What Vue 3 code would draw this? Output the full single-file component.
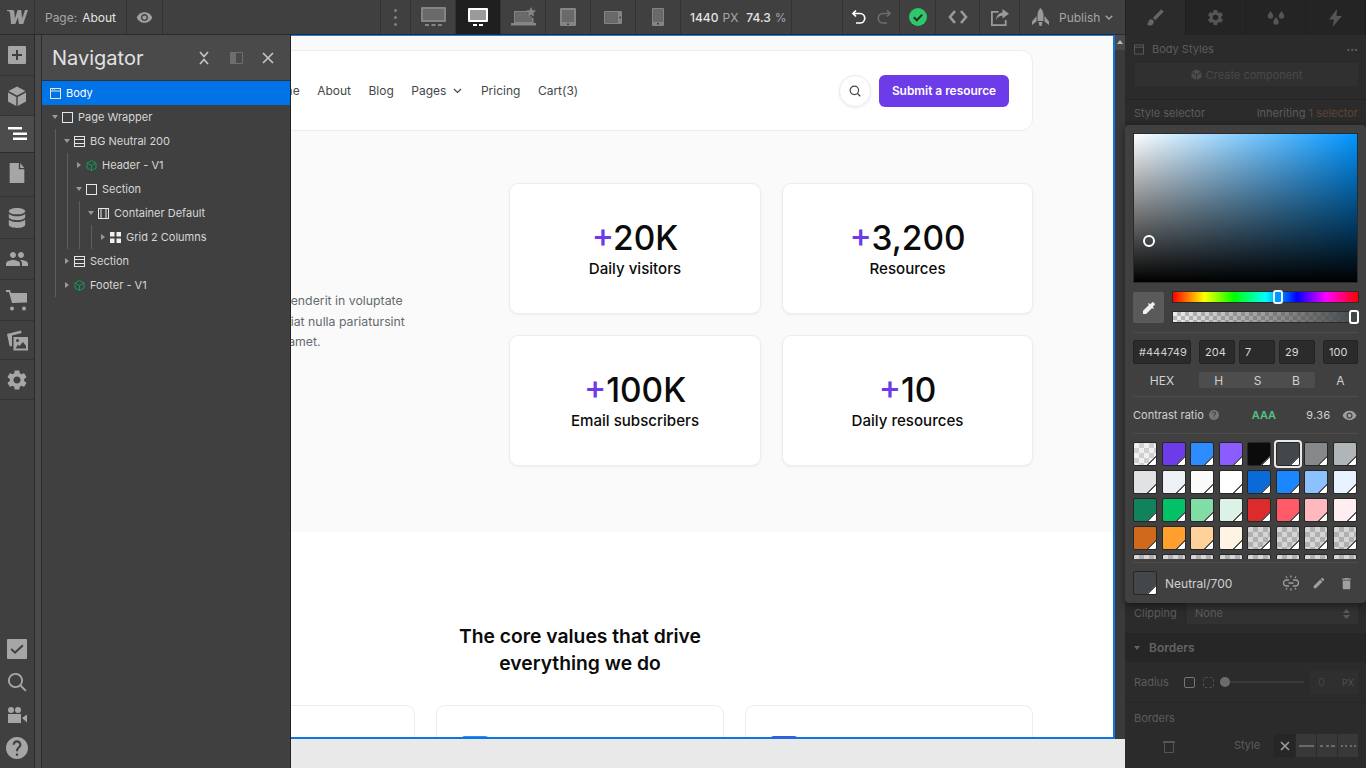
<script setup>
const railTop = [
  { id: "add", h: 41, w: 20, vb: "0 0 20 20", d: "M2 1h16a1 1 0 0 1 1 1v16a1 1 0 0 1-1 1H2a1 1 0 0 1-1-1V2a1 1 0 0 1 1-1zm7 4v4H5v2h4v4h2v-4h4V9h-4V5z" },
  { id: "cube", h: 40, w: 20, vb: "0 0 20 20", d: "M10 0.500L18.500 5 10 9.500 1.500 5zM1 6.500l8.300 4.400V20L1 15.500zM19 6.500l-8.300 4.400V20L19 15.500z" },
  { id: "nav", h: 37, w: 20, vb: "0 0 20 20", active: true, d: "M0 3h14v2.500H0zM5 8.500h14V11H5zM5 13.500h14V16H5z" },
  { id: "page", h: 44, w: 22, vb: "0 0 20 24", low: true, d: "M2 1h10v7h6v15H2zM13.500 1L18 6.500h-4.500z" },
  { id: "db", h: 42, w: 20, vb: "0 0 20 22", d: "M10 0c5 0 9 1.500 9 3.500S15 7 10 7 1 5.500 1 3.500 5 0 10 0zM1 6.500C3 8.300 6.500 9 10 9s7-.7 9-2.500V10c0 2-4 3.500-9 3.500S1 12 1 10zM1 13c2 1.800 5.500 2.500 9 2.500s7-.7 9-2.500v5.500c0 2-4 3.500-9 3.500s-9-1.500-9-3.500z" },
  { id: "users", h: 41, w: 24, vb: "0 0 24 24", d: "M16 11c1.660 0 2.990-1.340 2.990-3S17.660 5 16 5c-1.660 0-3 1.340-3 3s1.340 3 3 3zm-8 0c1.660 0 2.990-1.340 2.990-3S9.660 5 8 5C6.340 5 5 6.340 5 8s1.340 3 3 3zm0 2c-2.330 0-7 1.170-7 3.500V19h14v-2.500c0-2.330-4.670-3.500-7-3.500zm8 0c-.29 0-.62.02-.97.05 1.160.84 1.970 1.970 1.970 3.450V19h6v-2.500c0-2.330-4.670-3.500-7-3.500z" },
  { id: "cart", h: 41, w: 22, vb: "0 0 22 22", d: "M0 1h4l1 3h16v9.500L6 14 3 3H0zM6 17.500a2 2 0 1 1 0 4 2 2 0 0 1 0-4zM18 17.500a2 2 0 1 1 0 4 2 2 0 0 1 0-4z" },
  { id: "assets", h: 39, w: 21, vb: "0 0 21 20", d: "M0 3.500L14 0l.6 2.500L5 5v10.500l-2.300.6zM6.500 6.500H21V20H6.500zM8.500 18h10.500v-2.500l-3-4-3.500 4-1.500-1.500zM10.500 8.500a1.500 1.500 0 1 0 0 3 1.500 1.500 0 0 0 0-3z" },
  { id: "gear", h: 40, w: 24, vb: "0 0 24 24", d: "M19.140 12.940c.04-.3.06-.61.06-.94 0-.32-.02-.64-.07-.94l2.030-1.580c.18-.14.23-.41.12-.61l-1.920-3.320c-.12-.22-.37-.29-.59-.22l-2.390.96c-.5-.38-1.030-.7-1.620-.94l-.36-2.540c-.04-.24-.24-.41-.48-.41h-3.840c-.24 0-.43.17-.47.41l-.36 2.540c-.59.24-1.130.57-1.620.94l-2.390-.96c-.22-.08-.47 0-.59.22L2.740 8.870c-.12.21-.08.47.12.61l2.030 1.580c-.05.3-.09.63-.09.94s.02.64.07.94l-2.030 1.580c-.18.14-.23.41-.12.61l1.920 3.320c.12.22.37.29.59.22l2.390-.96c.5.38 1.030.7 1.620.94l.36 2.540c.05.24.24.41.48.41h3.840c.24 0 .44-.17.47-.41l.36-2.540c.59-.24 1.130-.56 1.620-.94l2.390.96c.22.08.47 0 .59-.22l1.920-3.320c.12-.22.07-.47-.12-.61l-2.010-1.580zM12 15.600c-1.980 0-3.600-1.620-3.600-3.600s1.620-3.600 3.600-3.600 3.600 1.620 3.600 3.600-1.620 3.600-3.600 3.600z" },
];

const railBottom = [
  { id: "tasks", w: 20, vb: "0 0 20 20", d: "M1 0h18a1 1 0 0 1 1 1v18a1 1 0 0 1-1 1H1a1 1 0 0 1-1-1V1a1 1 0 0 1 1-1zm14.200 5.500L8 12.300 4.800 9.300 3.500 10.700 8 15l8.600-8z" },
  { id: "search", w: 20, vb: "0 0 20 20", d: "M8.500 1a7.500 7.500 0 0 1 5.900 12.100l5.100 5.100-1.300 1.300-5.100-5.100A7.500 7.500 0 1 1 8.500 1zm0 1.800a5.700 5.700 0 1 0 0 11.400 5.700 5.700 0 0 0 0-11.400z" },
  { id: "video", w: 20, vb: "0 0 20 16", d: "M4 0a3 3 0 1 1 0 6 3 3 0 0 1 0-6zM11 0a3 3 0 1 1 0 6 3 3 0 0 1 0-6zM1 7h13v9H1zM15 11l5-3.500v8z" },
  { id: "help", w: 22, vb: "2 2 20 20", d: "M12 2C6.480 2 2 6.480 2 12s4.480 10 10 10 10-4.480 10-10S17.520 2 12 2zm1 17h-2v-2h2v2zm2.070-7.750l-.9.92C13.450 12.900 13 13.500 13 15h-2v-.5c0-1.100.45-2.100 1.170-2.830l1.240-1.260c.37-.36.59-.86.59-1.410 0-1.100-.9-2-2-2s-2 .9-2 2H8c0-2.210 1.790-4 4-4s4 1.790 4 4c0 .88-.36 1.680-.93 2.250z" },
];

const tree = [
  { label: "Body", depth: -1, icon: "body", active: true },
  { label: "Page Wrapper", depth: 0, icon: "box", caret: "down" },
  { label: "BG Neutral 200", depth: 1, icon: "section", caret: "down" },
  { label: "Header - V1", depth: 2, icon: "comp", caret: "right" },
  { label: "Section", depth: 2, icon: "box", caret: "down" },
  { label: "Container Default", depth: 3, icon: "container", caret: "down" },
  { label: "Grid 2 Columns", depth: 4, icon: "grid", caret: "right" },
  { label: "Section", depth: 1, icon: "section", caret: "right" },
  { label: "Footer - V1", depth: 1, icon: "comp", caret: "right" },
];

const guides = [
  { x: 13, top: 48, height: 168 },
  { x: 25, top: 72, height: 96 },
  { x: 37, top: 120, height: 48 },
  { x: 49, top: 144, height: 24 },
];

const stats = [
  { value: "20K", label: "Daily visitors" },
  { value: "3,200", label: "Resources" },
  { value: "100K", label: "Email subscribers" },
  { value: "10", label: "Daily resources" },
];

const navLinks = ["Home", "About", "Blog", "Pages", "Pricing", "Cart(3)"];

const swatches = [
  "none", "#6d3be8", "#2d8cff", "#8b5cff", "#0b0b0b", "#444749", "#86898b", "#b0b5b8",
  "#e0e2e4", "#edf1f5", "#fafafa", "#ffffff", "#0a6bd8", "#1a86ff", "#8bc1ff", "#e6f2ff",
  "#11835c", "#04c067", "#7fdda5", "#ddf2e6", "#dc2b2b", "#ff5a67", "#ffb8be", "#ffeef0",
  "#d0691b", "#ff9f2d", "#ffd29b", "#fff3e3", "none", "none", "none", "none",
  "none", "none", "none", "none", "none", "none", "none", "none",
];
</script>

<template>
  <div class="app">
    <header class="topbar">
      <div class="seg logo">
        <svg width="21" height="14" viewBox="0 0 21 14"><path fill="#9c9c9c" d="M21 0l-4.800 14h-4.300l-1-6.500L8.300 14H4L3 3.200C3 1.500 2 1 0 1V0h5.200c1.300 0 2 .6 2.100 1.900l.6 6.600L10.600 0h3.600l1 8.500L18 0z" /></svg>
      </div>
      <div class="seg page-name"><span class="muted">Page:</span><span class="bright">About</span></div>
      <div class="seg eye">
        <svg width="17" height="17" viewBox="0 0 24 24"><path fill="#a0a0a0" d="M12 4.500C7 4.500 2.730 7.610 1 12c1.730 4.390 6 7.500 11 7.500s9.270-3.110 11-7.500c-1.730-4.390-6-7.500-11-7.500zM12 17c-2.760 0-5-2.240-5-5s2.240-5 5-5 5 2.240 5 5-2.240 5-5 5zm0-8c-1.660 0-3 1.340-3 3s1.340 3 3 3 3-1.340 3-3-1.340-3-3-3z" /></svg>
      </div>
      <div class="grow"></div>
      <div class="seg dots"><i></i><i></i><i></i></div>
      <div class="seg device">
        <svg width="25" height="20" viewBox="0 0 25 20" fill="#858585"><path fill-rule="evenodd" d="M1 0h23a1 1 0 0 1 1 1v13a1 1 0 0 1-1 1H1a1 1 0 0 1-1-1V1a1 1 0 0 1 1-1zm1 2v11h21V2z" /><path fill="#6a6a6a" d="M2 2h21v11H2z" /><path d="M4 17h4v2H4zM10.500 17h4v2h-4zM17 17h4v2h-4z" /></svg>
      </div>
      <div class="seg device on">
        <svg width="20" height="19" viewBox="0 0 20 19"><path fill="#fff" fill-rule="evenodd" d="M1 0h18a1 1 0 0 1 1 1v12a1 1 0 0 1-1 1H1a1 1 0 0 1-1-1V1a1 1 0 0 1 1-1zm1 2v10h16V2z" /><path fill="#9a9a9a" d="M2 2h16v10H2z" /><path fill="#fff" d="M5 16h4v2H5zM11 16h4v2h-4z" /></svg>
      </div>
      <div class="seg device">
        <svg width="25" height="20" viewBox="0 0 25 20" fill="#858585"><path fill-rule="evenodd" d="M3 4h14v1.500H4.500V15H21v-4h1.500v5H3z" /><path fill="#6a6a6a" d="M4.500 5.500H16l2 3 3 .5v6H4.500z" /><path d="M0 16h25v2.500H0z" /><path d="M20 0l1.500 3.200 3.500.4-2.600 2.400.7 3.500-3.100-1.800-3.100 1.800.7-3.500L15 3.600l3.500-.4z" /></svg>
      </div>
      <div class="seg device">
        <svg width="16" height="18" viewBox="0 0 16 18" fill="#858585"><path fill-rule="evenodd" d="M1 0h14a1 1 0 0 1 1 1v16a1 1 0 0 1-1 1H1a1 1 0 0 1-1-1V1a1 1 0 0 1 1-1zm1 2v12h12V2zm5 13.500v1.500h2v-1.500z" /><path fill="#6a6a6a" d="M2 2h12v12H2z" /></svg>
      </div>
      <div class="seg device">
        <svg width="18" height="13" viewBox="0 0 18 13" fill="#858585"><path fill-rule="evenodd" d="M1 0h16a1 1 0 0 1 1 1v11a1 1 0 0 1-1 1H1a1 1 0 0 1-1-1V1a1 1 0 0 1 1-1zm.5 1.500v10h12v-10zm14 4v2h1.500v-2z" /><path fill="#6a6a6a" d="M1.500 1.500h12v10h-12z" /></svg>
      </div>
      <div class="seg device">
        <svg width="12" height="18" viewBox="0 0 12 18" fill="#858585"><path fill-rule="evenodd" d="M1 0h10a1 1 0 0 1 1 1v16a1 1 0 0 1-1 1H1a1 1 0 0 1-1-1V1a1 1 0 0 1 1-1zm.5 1.500v12.500h9V1.500zM5 15v1.500h2V15z" /><path fill="#6a6a6a" d="M1.500 1.500h9V14h-9z" /></svg>
      </div>
      <div class="seg size">
        <span class="bright">1440</span><span class="muted unit">PX</span>
        <span class="bright zoom">74.3</span><span class="muted unit">%</span>
      </div>
      <div class="seg history">
        <svg width="16" height="16" viewBox="0 0 16 16" fill="none" stroke="#fff" stroke-width="1.700"><path d="M5 1.500L2 4.500l3 3M2.500 4.500H9a4.500 4.500 0 0 1 0 9.500H5" /></svg>
        <svg width="16" height="16" viewBox="0 0 16 16" fill="none" stroke="#6d6d6d" stroke-width="1.700"><path d="M11 1.500l3 3-3 3M13.500 4.500H7a4.500 4.500 0 0 0 0 9.500h4" /></svg>
      </div>
      <div class="seg saved">
        <svg width="18" height="18" viewBox="0 0 18 18"><circle cx="9" cy="9" r="9" fill="#2fc76b" /><path d="M4.800 9.200l3 3 5.400-5.600" fill="none" stroke="#24302a" stroke-width="2" /></svg>
      </div>
      <div class="seg code">
        <svg width="20" height="14" viewBox="0 0 20 14" fill="none" stroke="#9a9a9a" stroke-width="2.600"><path d="M7 1L2 7l5 6M13 1l5 6-5 6" /></svg>
      </div>
      <div class="seg share">
        <svg width="18" height="17" viewBox="0 0 18 17" fill="#9a9a9a"><path d="M0 2h7.500v1.800H1.800v11.400h12V11h1.800v6H0z" /><path d="M11.500 0L18 4.800l-6.500 4.700V6.800C8.800 6.800 6.500 8 5 11c.3-4.300 2.800-7.300 6.500-7.600z" /></svg>
      </div>
      <div class="seg publish">
        <svg width="17" height="18" viewBox="0 0 17 18" fill="#9a9a9a"><path d="M8.500 0c2 1.800 3 4.500 3 7.200V13h-6V7.200C5.500 4.500 6.500 1.800 8.500 0zM4.500 8v5.500L0 17v-3.500zM12.500 8v5.500L17 17v-3.500zM6.500 14h4l-1 4h-2z" /></svg>
        <span>Publish</span>
        <svg width="8" height="5" viewBox="0 0 8 5" fill="none" stroke="#a5a5a5" stroke-width="1.300"><path d="M.7.7L4 4 7.300.7" /></svg>
      </div>
    </header>

    <div class="body">
      <nav class="rail">
        <div class="rail-list">
          <div
            v-for="item in railTop"
            :key="item.id"
            class="rail-btn"
            :class="{ active: item.active, low: item.low }"
            :style="{ height: item.h + 'px' }"
          >
            <svg :width="item.w" :height="item.w" :viewBox="item.vb"><path :fill="item.active ? '#fff' : '#a6a6a6'" fill-rule="evenodd" :d="item.d" /></svg>
          </div>
        </div>
        <div class="rail-bottom">
          <div v-for="item in railBottom" :key="item.id" class="rail-low">
            <svg :width="item.w" :height="item.w" :viewBox="item.vb"><path fill="#a6a6a6" fill-rule="evenodd" :d="item.d" /></svg>
          </div>
        </div>
      </nav>

      <main class="workspace">
        <div class="view">
          <div class="page">
            <section class="hero">
              <div class="site-header">
                <ul class="site-nav">
                  <li v-for="link in navLinks" :key="link">
                    {{ link }}
                    <svg v-if="link === 'Pages'" class="nav-caret" width="9" height="6" viewBox="0 0 9 6" fill="none" stroke="#444749" stroke-width="1.200"><path d="M1 1l3.500 3.500L8 1" /></svg>
                  </li>
                </ul>
                <div class="site-actions">
                  <span class="search-btn">
                    <svg width="12" height="12" viewBox="0 0 13 13" fill="none" stroke="#444749" stroke-width="1.300"><circle cx="5.800" cy="5.800" r="4.600" /><path d="M9.200 9.200l3 3" /></svg>
                  </span>
                  <span class="submit-btn">Submit a resource</span>
                </div>
              </div>

              <div class="hero-grid">
                <p class="hero-copy">
                  Lorem ipsum dolor in reprehenderit in voluptate<br />
                  consequat adipiscing a feugiat nulla pariatursint<br />
                  occaecat cupidata dolor sit amet.
                </p>
                <div class="stats">
                  <div v-for="s in stats" :key="s.label" class="stat">
                    <div class="stat-value"><span class="plus">+</span>{{ s.value }}</div>
                    <div class="stat-label">{{ s.label }}</div>
                  </div>
                </div>
              </div>
            </section>

            <section class="values">
              <h2>The core values that drive<br />everything we do</h2>
              <div class="value-cards">
                <div class="value-card"><span class="value-icon purple"></span></div>
                <div class="value-card"><span class="value-icon blue"></span></div>
                <div class="value-card"><span class="value-icon purple"></span></div>
              </div>
            </section>
          </div>
          <div class="scroll">
            <span class="scroll-up"></span>
          </div>
        </div>
        <div class="below"></div>

        <aside class="navigator">
          <div class="nav-head">
            <span class="nav-title">Navigator</span>
            <svg class="nav-collapse" width="10" height="14" viewBox="0 0 10 14" fill="none" stroke="#c4c4c4" stroke-width="1.700"><path d="M1 1l4 4.500L9 1M1 13l4-4.500L9 13" /></svg>
            <svg class="nav-dock" width="13" height="12" viewBox="0 0 13 12"><path fill="#6e6e6e" d="M0 0h6v12H0z" /><path fill="none" stroke="#6e6e6e" stroke-width="1" d="M6 .5h6.500v11H6" /></svg>
            <svg class="nav-close" width="12" height="12" viewBox="0 0 12 12" fill="none" stroke="#c4c4c4" stroke-width="1.700"><path d="M1 1l10 10M11 1L1 11" /></svg>
          </div>
          <div class="tree">
            <span
              v-for="g in guides"
              :key="g.x"
              class="guide"
              :style="{ left: g.x + 'px', top: g.top + 'px', height: g.height + 'px' }"
            ></span>
            <div
              v-for="(row, i) in tree"
              :key="i"
              class="tree-row"
              :class="{ selected: row.active }"
              :style="{ paddingLeft: Math.max(0, 10 + row.depth * 12) + 'px' }"
            >
              <span class="caret-slot">
                <span v-if="row.caret" class="caret" :class="row.caret"></span>
              </span>
              <svg class="tree-icon" width="11" height="11" viewBox="0 0 11 11" fill="none" :stroke="row.icon === 'comp' ? '#0f9a56' : '#e6e6e6'">
                <template v-if="row.icon === 'body'"><rect x=".5" y=".5" width="10" height="10" /><path d="M.5 3h10" /><path d="M2 1.700h.8M4 1.700h.8" /></template>
                <rect v-else-if="row.icon === 'box'" x=".5" y=".5" width="10" height="10" />
                <template v-else-if="row.icon === 'section'"><rect x=".5" y=".5" width="10" height="10" /><path d="M.5 3.500h10M.5 7.500h10" /></template>
                <template v-else-if="row.icon === 'container'"><rect x=".5" y=".5" width="10" height="10" /><path d="M3 .5v10M8 .5v10" /></template>
                <template v-else-if="row.icon === 'comp'"><path d="M5.500.5l4.500 2.500v5l-4.500 2.500L1 8V3zM1 3l4.500 2.500L10 3M5.500 5.500v5" /></template>
                <template v-else><rect x="0" y="0" width="4.500" height="4.500" fill="#f0f0f0" stroke="none" /><rect x="6.500" y="0" width="4.500" height="4.500" fill="#f0f0f0" stroke="none" /><rect x="0" y="6.500" width="4.500" height="4.500" fill="#f0f0f0" stroke="none" /><rect x="6.500" y="6.500" width="4.500" height="4.500" fill="#f0f0f0" stroke="none" /></template>
              </svg>
              <span class="tree-label">{{ row.label }}</span>
            </div>
          </div>
        </aside>
      </main>

      <aside class="panel">
        <div class="panel-top">
          <div class="tabs">
            <div class="tab on">
              <svg width="21" height="21" viewBox="0 0 24 24"><path fill="#666" d="M7 14c-1.660 0-3 1.340-3 3 0 1.310-1.160 2-2 2 .92 1.220 2.490 2 4 2 2.210 0 4-1.790 4-4 0-1.660-1.340-3-3-3zm13.710-9.370l-1.340-1.340c-.39-.39-1.020-.39-1.410 0L9 12.250 11.750 15l8.960-8.960c.39-.39.39-1.030 0-1.410z" /></svg>
            </div>
            <div class="tab">
              <svg width="19" height="19" viewBox="0 0 24 24"><path fill="#555" d="M19.140 12.940c.04-.3.06-.61.06-.94 0-.32-.02-.64-.07-.94l2.030-1.580c.18-.14.23-.41.12-.61l-1.920-3.320c-.12-.22-.37-.29-.59-.22l-2.390.96c-.5-.38-1.030-.7-1.620-.94l-.36-2.540c-.04-.24-.24-.41-.48-.41h-3.840c-.24 0-.43.17-.47.41l-.36 2.540c-.59.24-1.130.57-1.620.94l-2.390-.96c-.22-.08-.47 0-.59.22L2.740 8.870c-.12.21-.08.47.12.61l2.030 1.580c-.05.3-.09.63-.09.94s.02.64.07.94l-2.030 1.580c-.18.14-.23.41-.12.61l1.920 3.320c.12.22.37.29.59.22l2.390-.96c.5.38 1.030.7 1.620.94l.36 2.540c.05.24.24.41.48.41h3.840c.24 0 .44-.17.47-.41l.36-2.540c.59-.24 1.130-.56 1.620-.94l2.390.96c.22.08.47 0 .59-.22l1.920-3.320c.12-.22.07-.47-.12-.61l-2.010-1.580zM12 15.600c-1.980 0-3.600-1.620-3.600-3.600s1.620-3.600 3.600-3.600 3.600 1.620 3.600 3.600-1.620 3.600-3.600 3.600z" /></svg>
            </div>
            <div class="tab">
              <svg width="18" height="16" viewBox="0 0 18 16" fill="#555"><path d="M3.500 1c1.500 2 2.700 3.400 2.700 5a2.700 2.700 0 0 1-5.400 0c0-1.600 1.200-3 2.700-5zM14.500 1c1.500 2 2.700 3.400 2.700 5a2.700 2.700 0 0 1-5.400 0c0-1.600 1.200-3 2.700-5zM9 7c1.500 2 2.700 3.400 2.700 5a2.700 2.700 0 0 1-5.400 0C6.300 10.400 7.500 9 9 7z" /></svg>
            </div>
            <div class="tab">
              <svg width="13" height="18" viewBox="0 0 13 18" fill="#555"><path d="M8 0L0 10.500h5L3.500 18 13 7H7.500z" /></svg>
            </div>
          </div>
          <div class="styles-head">
            <svg width="10" height="11" viewBox="0 0 11 11" fill="none" stroke="#5c5c5c"><rect x=".5" y=".5" width="10" height="10" /><path d="M.5 3h10" /></svg>
            <span>Body Styles</span>
            <span class="more">•••</span>
          </div>
          <div class="create-btn">
            <svg width="11" height="11" viewBox="0 0 20 20"><path fill="#4c4c4c" d="M10 .5L18.500 5 10 9.500 1.500 5zM1 6.500l8.300 4.400V20L1 15.500zM19 6.500l-8.300 4.400V20L19 15.500z" /></svg>
            <span>Create component</span>
          </div>
          <div class="selector-row">
            <span>Style selector</span>
            <span class="inherit">Inheriting <em>1 selector</em></span>
          </div>
        </div>

        <div class="panel-low">
          <div class="clip-row">
            <span class="clip-name">Clipping</span>
            <span class="clip-select">None
              <svg width="7" height="10" viewBox="0 0 7 10" fill="#5a5a5a"><path d="M3.500 0L7 4H0zM0 6h7l-3.500 4z" /></svg>
            </span>
          </div>
          <div class="borders-head"><span class="borders-caret"></span>Borders</div>
          <div class="radius-row">
            <span class="radius-name">Radius</span>
            <span class="radius-one"></span>
            <span class="radius-all"></span>
            <span class="slider"><i></i></span>
            <span class="radius-val"><b>0</b><small>PX</small></span>
          </div>
          <div class="border-label">Borders</div>
          <div class="style-row">
            <svg class="side-icon" width="12" height="12" viewBox="0 0 12 12" fill="none" stroke="#555"><path stroke-width="2" d="M0 1h12" /><path d="M1.500 2v9.500h9V2" /></svg>
            <span class="style-name">Style</span>
            <div class="style-opts">
              <span class="opt on">
                <svg width="10" height="10" viewBox="0 0 10 10" stroke="#9a9a9a" stroke-width="1.700"><path d="M1 1l8 8M9 1l-8 8" /></svg>
              </span>
              <span class="opt"><i class="line solid"></i></span>
              <span class="opt"><i class="line dashed"></i></span>
              <span class="opt"><i class="line dotted"></i></span>
            </div>
          </div>
        </div>

        <div class="picker">
          <div class="sat">
            <span class="sat-thumb"></span>
          </div>
          <div class="sliders">
            <div class="dropper">
              <svg width="16" height="16" viewBox="0 0 24 24"><path fill="#f0f0f0" d="M20.710 5.630l-2.340-2.340c-.39-.39-1.020-.39-1.410 0l-3.120 3.120-1.930-1.910-1.410 1.410 1.420 1.420L3 16.250V21h4.750l8.920-8.920 1.420 1.420 1.410-1.410-1.920-1.920 3.120-3.120c.4-.4.4-1.030.01-1.420z" /></svg>
            </div>
            <div class="bars">
              <div class="hue"><span class="hue-thumb"></span></div>
              <div class="alpha"><span class="alpha-thumb"></span></div>
            </div>
          </div>
          <div class="fields">
            <span class="field hex">#444749</span>
            <span class="field num">204</span>
            <span class="field num">7</span>
            <span class="field num">29</span>
            <span class="field num a">100</span>
          </div>
          <div class="field-labels">
            <span class="lab hex">HEX</span>
            <span class="hsb"><span>H</span><span>S</span><span>B</span></span>
            <span class="lab a">A</span>
          </div>
          <div class="contrast">
            <span class="c-name">Contrast ratio</span>
            <svg width="10" height="10" viewBox="2 2 20 20"><path fill="#777" d="M12 2C6.480 2 2 6.480 2 12s4.480 10 10 10 10-4.480 10-10S17.520 2 12 2zm1 17h-2v-2h2v2zm2.070-7.750l-.9.92C13.450 12.900 13 13.500 13 15h-2v-.5c0-1.100.45-2.100 1.170-2.830l1.240-1.260c.37-.36.59-.86.59-1.410 0-1.100-.9-2-2-2s-2 .9-2 2H8c0-2.210 1.790-4 4-4s4 1.790 4 4c0 .88-.36 1.680-.93 2.250z" /></svg>
            <span class="c-grade">AAA</span>
            <span class="c-val">9.36</span>
            <svg width="15" height="15" viewBox="0 0 24 24"><path fill="#a0a0a0" d="M12 4.500C7 4.500 2.730 7.610 1 12c1.730 4.390 6 7.500 11 7.500s9.270-3.110 11-7.500c-1.730-4.390-6-7.500-11-7.500zM12 17c-2.760 0-5-2.240-5-5s2.240-5 5-5 5 2.240 5 5-2.240 5-5 5zm0-8c-1.660 0-3 1.340-3 3s1.340 3 3 3 3-1.340 3-3-1.340-3-3-3z" /></svg>
          </div>
          <div class="swatches">
            <span
              v-for="(c, i) in swatches"
              :key="i"
              class="swatch"
              :class="{ checker: c === 'none', dark: i >= 28, picked: i === 5 }"
              :style="c === 'none' ? null : { '--c': c }"
            ></span>
          </div>
          <div class="swatch-foot">
            <span class="swatch big" style="--c: #444749"></span>
            <span class="foot-name">Neutral/700</span>
            <svg width="16" height="16" viewBox="0 0 16 16" fill="none" stroke="#a0a0a0" stroke-width="1.300"><path d="M6 5H3.500a3 3 0 0 0 0 6H6M10 5h2.500a3 3 0 0 1 0 6H10M5.500 8h5M8 .5v2M8 13.500v2M3 1.500l1 1.500M13 1.500l-1 1.500M3 14.500l1-1.500M13 14.500l-1-1.500" /></svg>
            <svg width="14" height="14" viewBox="0 0 24 24"><path fill="#a0a0a0" d="M3 17.250V21h3.750L17.810 9.940l-3.750-3.750L3 17.250zM20.710 7.040c.39-.39.39-1.020 0-1.410l-2.340-2.340c-.39-.39-1.020-.39-1.410 0l-1.830 1.830 3.750 3.750 1.830-1.830z" /></svg>
            <svg width="15" height="15" viewBox="0 0 24 24"><path fill="#a0a0a0" d="M6 19c0 1.100.9 2 2 2h8c1.100 0 2-.9 2-2V7H6v12zM19 4h-3.500l-1-1h-5l-1 1H5v2h14V4z" /></svg>
          </div>
        </div>
      </aside>
    </div>
  </div>
</template>

<style scoped>
.app {
  width: 1366px;
  height: 768px;
  display: flex;
  flex-direction: column;
  overflow: hidden;
  background: #404040;
  font-family: Inter, "Noto Sans", sans-serif;
  font-size: 12px;
  color: #d9d9d9;
}
.muted { color: #a6a6a6; }
.bright { color: #e4e4e4; }
.grow { flex: 1; }

/* top bar */
.topbar {
  height: 35px;
  flex: none;
  display: flex;
  padding-right: 241px;
  background: #404040;
  border-bottom: 1px solid #2b2b2b;
  box-sizing: border-box;
}
.seg {
  display: flex;
  align-items: center;
  justify-content: center;
  box-sizing: border-box;
  border-right: 1px solid #333;
  height: 34px;
  flex: none;
}
.logo { width: 35px; }
.page-name { width: 92px; gap: 5px; }
.eye { width: 36px; }
.dots {
  width: 31px;
  flex-direction: column;
  gap: 4px;
  border-left: 1px solid #333;
  border-right: 1px solid #333;
}
.dots i {
  width: 3px;
  height: 3px;
  border-radius: 50%;
  background: #808080;
}
.device { width: 45px; }
.device.on { background: #1f1f1f; }
.size {
  width: 111px;
  justify-content: flex-start;
  padding-left: 9px;
  font-weight: 500;
  font-size: 12px;
}
.unit { margin-left: 4px; font-weight: 400; }
.zoom { margin-left: 8px; }
.history { width: 58px; gap: 9px; border-left: 1px solid #333; margin-left: 50px; }
.saved { width: 36px; }
.code { width: 44px; }
.share { width: 40px; }
.publish {
  width: 105px;
  gap: 10px;
  color: #a5a5a5;
  border-right: none;
  justify-content: flex-start;
  padding-left: 12px;
}
.publish span { margin-right: -5px; }

.body {
  flex: 1;
  display: flex;
  min-height: 0;
}

/* left rail */
.rail {
  width: 35px;
  flex: none;
  display: flex;
  flex-direction: column;
  justify-content: space-between;
  border-right: 1px solid #2b2b2b;
  box-sizing: border-box;
}
.rail-btn {
  display: flex;
  align-items: center;
  justify-content: center;
  border-bottom: 1px solid #333;
  box-sizing: border-box;
  width: 34px;
}
.rail-btn.active { background: #4c4c4c; width: 35px; border-bottom: 1px solid #2b2b2b; }
.rail-btn.low { padding-bottom: 4px; }
.rail-bottom { padding-bottom: 4px; }
.rail-low {
  height: 33px;
  display: flex;
  align-items: center;
  justify-content: center;
}

/* canvas */
.workspace {
  position: relative;
  flex: 1;
  min-width: 0;
  display: flex;
  flex-direction: column;
  background: #e9e9e9;
}
.view {
  height: 704px;
  flex: none;
  display: flex;
  justify-content: flex-end;
}
.page {
  width: 1070px;
  height: 704px;
  overflow: hidden;
  box-sizing: border-box;
  border-top: 1px solid #1a7fe8;
  border-right: 2px solid #0d75e0;
  border-bottom: 2px solid #0d75e0;
  background: #fff;
}
.scroll {
  width: 10px;
  background: #3a3a3a;
  flex: none;
}
.scroll-up {
  display: block;
  height: 15px;
  background: #4a4a4a;
  position: relative;
}
.scroll-up::after {
  content: "";
  position: absolute;
  left: 2px;
  top: 5px;
  border-left: 3px solid transparent;
  border-right: 3px solid transparent;
  border-bottom: 4px solid #bbb;
}
.below { flex: 1; background: #e9e9e9; }

.hero {
  background: #fafafa;
  height: 496px;
  box-sizing: border-box;
  padding: 14px 80px 0 82px;
}
.site-header {
  height: 81px;
  box-sizing: border-box;
  display: flex;
  align-items: center;
  justify-content: space-between;
  padding: 0 23px 0 138px;
  background: #fff;
  border: 1px solid #ededed;
  border-radius: 12px;
}
.site-nav {
  list-style: none;
  margin: 0;
  padding: 0;
  display: flex;
  gap: 17.500px;
  font-size: 12px;
  color: #444749;
}
.site-nav li { display: flex; align-items: center; white-space: nowrap; }
.nav-caret { margin-left: 7px; margin-right: 1px; }
.site-actions { display: flex; align-items: center; gap: 8px; }
.search-btn {
  width: 32px;
  height: 32px;
  box-sizing: border-box;
  border: 1px solid #ececec;
  border-radius: 50%;
  background: #fff;
  display: flex;
  align-items: center;
  justify-content: center;
  box-shadow: 0 1px 3px rgba(20, 20, 43, 0.08);
}
.submit-btn {
  width: 130px;
  height: 32px;
  display: flex;
  align-items: center;
  justify-content: center;
  border-radius: 6px;
  background: #6d3be8;
  color: #fff;
  font-size: 11.900px;
  font-weight: 600;
}

.hero-grid {
  display: flex;
  justify-content: space-between;
  margin-top: 52px;
}
.hero-copy {
  margin: 108px 0 0;
  white-space: nowrap;
  font-size: 12.300px;
  line-height: 20.500px;
  color: #666a6d;
}
.stats {
  width: 524px;
  flex: none;
  display: grid;
  grid-template-columns: 252px 251px;
  grid-auto-rows: 131px;
  gap: 21px;
}
.stat {
  box-sizing: border-box;
  background: #fff;
  border: 1px solid #ededed;
  border-radius: 9px;
  box-shadow: 0 1px 3px rgba(20, 20, 43, 0.05);
  display: flex;
  flex-direction: column;
  align-items: center;
  padding-top: 33px;
}
.stat-value {
  font-size: 33.400px;
  line-height: 43px;
  font-weight: 500;
  color: #0b0b0b;
}
.plus { color: #6d3be8; }
.stat-label {
  margin-top: -1px;
  font-size: 15.100px;
  line-height: 20px;
  font-weight: 500;
  color: #0b0b0b;
}

.values { padding: 91px 80px 0 82px; }
.values h2 {
  margin: 0;
  text-align: center;
  font-size: 19.300px;
  line-height: 27px;
  font-weight: 600;
  color: #0b0b0b;
}
.value-cards {
  margin-top: 28px;
  display: grid;
  grid-template-columns: repeat(3, 288px);
  gap: 21px;
}
.value-card {
  height: 200px;
  box-sizing: border-box;
  padding: 30px 23px;
  background: #fff;
  border: 1px solid #ededed;
  border-radius: 9px;
}
.value-icon {
  display: block;
  width: 30px;
  height: 30px;
  border-radius: 5px;
}
.value-icon.blue { background: #2d8cff; }
.value-icon.purple { background: #6d3be8; }

/* navigator */
.navigator {
  position: absolute;
  left: 0;
  top: 0;
  bottom: 0;
  width: 256px;
  box-sizing: border-box;
  background: #404040;
  border-left: 6px solid #4a4a4a;
  border-right: 1px solid #232323;
  box-shadow: -1px 0 0 #2b2b2b;
}
.nav-head {
  height: 46px;
  box-sizing: border-box;
  position: relative;
  display: flex;
  align-items: center;
  padding-left: 10px;
  background: #4a4a4a;
  border-left: 1px solid #2b2b2b;
  border-bottom: 1px solid #333;
}
.nav-title { font-size: 20px; color: #e2e2e2; }
.nav-collapse { position: absolute; left: 157px; top: 16px; }
.nav-dock { position: absolute; left: 188px; top: 17px; }
.nav-close { position: absolute; left: 220px; top: 17px; }
.tree {
  position: relative;
  border-left: 1px solid #2b2b2b;
  height: calc(100% - 46px);
  box-sizing: border-box;
}
.guide {
  position: absolute;
  width: 1px;
  background: #5e5e5e;
}
.tree-row {
  height: 24px;
  display: flex;
  align-items: center;
  font-size: 11px;
  color: #d6d6d6;
  position: relative;
}
.tree-row.selected { background: #0073e6; color: #fff; }
.caret-slot {
  width: 10px;
  flex: none;
  display: flex;
  justify-content: flex-start;
}
.caret { display: block; }
.caret.down {
  border-left: 3px solid transparent;
  border-right: 3px solid transparent;
  border-top: 4px solid #999;
}
.caret.right {
  margin-left: 1px;
  border-top: 3px solid transparent;
  border-bottom: 3px solid transparent;
  border-left: 4px solid #999;
}
.tree-icon { flex: none; margin-right: 5px; }
.tree-row.selected .caret-slot { width: 8px; }

/* right panel */
.panel {
  width: 241px;
  flex: none;
  position: relative;
  margin-top: -35px;
  background: #2b2b2b;
  color: #5c5c5c;
  font-size: 11px;
  display: flex;
  flex-direction: column;
  justify-content: space-between;
}
.panel-top { display: flex; flex-direction: column; }
.tabs { display: flex; height: 35px; background: #242424; border-left: 1px solid #1f1f1f; }
.tab {
  flex: 1;
  display: flex;
  align-items: center;
  justify-content: center;
  border-right: 1px solid #1f1f1f;
}
.tab.on { background: #2b2b2b; }
.styles-head {
  height: 28px;
  display: flex;
  align-items: center;
  gap: 8px;
  padding: 0 8px 0 9px;
  font-size: 11px;
}
.more { margin-left: auto; font-size: 7px; letter-spacing: 0; }
.create-btn {
  margin: 0 8px 0 10px;
  height: 23px;
  display: flex;
  align-items: center;
  justify-content: center;
  gap: 4px;
  background: #303030;
  color: #494949;
}
.selector-row {
  margin-top: 13px;
  padding: 6px 8px 0 9px;
  height: 20px;
  border-top: 1px solid #242424;
  display: flex;
  justify-content: space-between;
}
.inherit em { font-style: normal; color: #5f4433; }

.panel-low { display: flex; flex-direction: column; }
.clip-row {
  height: 30px;
  display: flex;
  align-items: flex-start;
  padding: 0 8px 0 9px;
  line-height: 21px;
}
.clip-name { width: 53px; flex: none; }
.clip-select {
  flex: 1;
  height: 21px;
  padding: 0 8px;
  background: #323232;
  display: flex;
  align-items: center;
  justify-content: space-between;
}
.borders-head {
  height: 29px;
  display: flex;
  align-items: center;
  gap: 9px;
  padding-left: 9px;
  background: #262626;
  font-size: 12px;
  font-weight: 600;
  color: #636363;
}
.borders-caret {
  border-left: 3.500px solid transparent;
  border-right: 3.500px solid transparent;
  border-top: 4px solid #636363;
}
.radius-row {
  height: 41px;
  display: flex;
  align-items: center;
  padding: 0 8px 0 9px;
  border-bottom: 1px solid #262626;
  box-sizing: border-box;
}
.radius-name { width: 50px; }
.radius-one {
  width: 9px;
  height: 9px;
  border: 1.500px solid #777;
  border-radius: 2px;
}
.radius-all {
  margin-left: 8px;
  width: 9px;
  height: 9px;
  border: 1.500px dashed #4c4c4c;
  border-radius: 2px;
}
.slider {
  margin-left: 6px;
  width: 84px;
  height: 2px;
  background: #3a3a3a;
  position: relative;
}
.slider i {
  position: absolute;
  left: 0;
  top: -4px;
  width: 10px;
  height: 10px;
  border-radius: 50%;
  background: #6c6c6c;
}
.radius-val {
  margin-left: auto;
  width: 48px;
  height: 24px;
  box-sizing: border-box;
  padding: 0 4px 0 8px;
  background: #2f2f2f;
  display: flex;
  align-items: center;
  justify-content: space-between;
}
.radius-val b { font-weight: 400; color: #444; }
.radius-val small { font-size: 9px; color: #4f4f4f; }
.border-label { height: 30px; display: flex; align-items: center; padding-left: 9px; box-sizing: border-box; }
.style-row {
  height: 35px;
  display: flex;
  align-items: flex-start;
  padding: 1px 8px 0 38px;
  box-sizing: border-box;
}
.side-icon { margin-top: 7px; }
.style-name { margin-left: 59px; line-height: 23px; }
.style-opts {
  margin-left: auto;
  display: flex;
  gap: 1px;
  height: 23px;
}
.opt {
  width: 20px;
  background: #383838;
  display: flex;
  align-items: center;
  justify-content: center;
}
.opt.on { background: #262626; width: 21px; }
.line { display: block; width: 15px; height: 2px; background: #6a6a6a; }
.line.dashed { background: repeating-linear-gradient(to right, #6a6a6a 0 3.500px, transparent 3.500px 5.750px); }
.line.dotted { background: repeating-linear-gradient(to right, #6a6a6a 0 2px, transparent 2px 4.330px); }

/* colour picker */
.picker {
  position: absolute;
  left: 0;
  right: 0;
  top: 125px;
  height: 478px;
  box-sizing: border-box;
  padding: 9px 8px 0 8px;
  background: #404040;
  border-radius: 4px;
  box-shadow: 0 2px 8px rgba(0, 0, 0, 0.5);
  color: #d0d0d0;
  font-size: 11px;
}
.sat {
  height: 148px;
  margin: 0 1px;
  position: relative;
  background:
    linear-gradient(to bottom, rgba(0, 0, 0, 0), #000),
    linear-gradient(to right, #fff, #0095ff);
  box-shadow: 0 0 0 1px #2b2b2b;
}
.sat-thumb {
  position: absolute;
  left: 9px;
  top: 101px;
  width: 12px;
  height: 12px;
  box-sizing: border-box;
  border: 2px solid #fff;
  border-radius: 50%;
}
.sliders {
  margin-top: 10px;
  display: flex;
  gap: 9px;
  height: 32px;
}
.dropper {
  width: 31px;
  height: 31px;
  flex: none;
  background: #5a5a5a;
  border-radius: 2px;
  display: flex;
  align-items: center;
  justify-content: center;
}
.bars {
  flex: 1;
  display: flex;
  flex-direction: column;
  gap: 10px;
}
.hue {
  height: 10px;
  position: relative;
  background: linear-gradient(to right, #f00, #ff0 17%, #0f0 33%, #0ff 50%, #00f 67%, #f0f 83%, #f00);
  box-shadow: 0 0 0 1px #2b2b2b;
}
.hue-thumb {
  position: absolute;
  left: 100px;
  top: -2px;
  width: 10px;
  height: 14px;
  box-sizing: border-box;
  background: #0095ff;
  border: 2px solid #e8f3fb;
  border-radius: 3px;
}
.alpha {
  height: 10px;
  position: relative;
  background:
    linear-gradient(to right, rgba(68, 71, 73, 0), #444749),
    repeating-conic-gradient(#bbb 0 25%, #eee 0 50%) 0 0 / 8px 8px;
  box-shadow: 0 0 0 1px #2b2b2b;
}
.alpha-thumb {
  position: absolute;
  right: -1px;
  top: -2px;
  width: 10px;
  height: 14px;
  box-sizing: border-box;
  background: #444749;
  border: 2px solid #fff;
  border-radius: 3px;
}
.fields {
  display: flex;
  gap: 4px;
  border-top: 1px solid #4d4d4d;
  padding-top: 7px;
  margin-top: 8px;
}
.field {
  height: 24px;
  display: flex;
  align-items: center;
  box-sizing: border-box;
  padding-left: 5px;
  background: #2b2b2b;
  border: 1px solid #232323;
  border-radius: 2px;
  color: #d8d8d8;
}
.field.hex { width: 58px; margin-right: 4px; color: #cfcfcf; }
.field.num { width: 36px; }
.field.a { width: 35px; margin-left: 4px; }
.field-labels {
  margin-top: 8px;
  display: flex;
  align-items: center;
  height: 16px;
  padding-bottom: 8px;
  border-bottom: 1px solid #4d4d4d;
  font-size: 12px;
}
.lab.hex { width: 58px; text-align: center; margin-right: 8px; }
.hsb {
  width: 116px;
  height: 16px;
  display: flex;
  align-items: center;
  justify-content: space-around;
  background: #4d4d4d;
  border-radius: 2px;
}
.lab.a { flex: 1; text-align: center; margin-left: 8px; }
.contrast {
  height: 37px;
  display: flex;
  align-items: center;
  border-bottom: 1px solid #4d4d4d;
  box-sizing: border-box;
}
.c-name { margin-right: 5px; }
.c-grade { margin-left: 33px; color: #53c382; font-weight: 600; }
.c-val { margin-left: 30px; font-variant-numeric: tabular-nums; }
.contrast svg:last-child { margin-left: auto; margin-right: 1px; }
.swatches {
  height: 115px;
  overflow: hidden;
  display: grid;
  grid-template-columns: repeat(8, 24px);
  grid-auto-rows: 24px;
  column-gap: 4.500px;
  row-gap: 4px;
  padding: 2px;
  margin-left: -2px;
  margin-top: 6px;
}
.swatch {
  display: block;
  width: 24px;
  height: 24px;
  box-sizing: border-box;
  border: 1px solid #262626;
  border-radius: 2px;
  background: linear-gradient(135deg, var(--c) 0 79%, #555 79% 82%, #fff 82%);
}
.swatch.checker {
  background:
    linear-gradient(135deg, transparent 0 79%, #555 79% 82%, #fff 82%),
    repeating-conic-gradient(#d0d0d0 0 25%, #f0f0f0 0 50%) 0 0 / 10px 10px;
}
.swatch.checker.dark {
  background:
    linear-gradient(135deg, transparent 0 79%, #555 79% 82%, #fff 82%),
    repeating-conic-gradient(#b0b0b0 0 25%, #d5d5d5 0 50%) 0 0 / 10px 10px;
}
.swatch.picked { outline: 2px solid #e8e8e8; outline-offset: 0; }
.swatch-foot {
  margin-top: 3px;
  padding-top: 8px;
  border-top: 1px solid #4d4d4d;
  display: flex;
  align-items: center;
}
.foot-name { margin-left: 8px; margin-right: auto; font-size: 12px; color: #d0d0d0; }
.swatch-foot svg { margin-left: 13px; }
.swatch-foot svg:last-child { margin-right: 4px; }
</style>

<style>
html, body { background: #404040; overflow: hidden; }
</style>
